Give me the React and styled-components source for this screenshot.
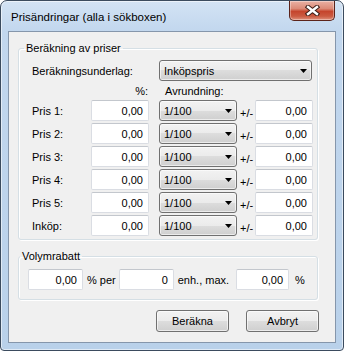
import React from 'react';
import styled, { createGlobalStyle } from 'styled-components';

const GlobalStyle = createGlobalStyle`
    html, body {
        margin: 0;
        padding: 0;
        background: #ffffff;
    }
    body {
        font-family: "Liberation Sans", Arial, sans-serif;
        font-size: 11px;
        color: #000;
    }
    * {
        box-sizing: border-box;
    }
`

const rows = ['Pris 1:', 'Pris 2:', 'Pris 3:', 'Pris 4:', 'Pris 5:', 'Inköp:'];

const Arrow = () => (
    <svg width="7" height="4" viewBox="0 0 7 4">
        <path d="M0 0 H7 L3.5 4 Z" fill="#000" />
    </svg>
);

const CloseGlyph = () => (
    <svg width="15" height="11" viewBox="0 0 15 11">
        <path d="M3 2 L12 9 M12 2 L3 9" stroke="#3b1c16" strokeWidth="4.4" strokeLinecap="square" />
        <path d="M3 2 L12 9 M12 2 L3 9" stroke="#ffffff" strokeWidth="2.4" strokeLinecap="square" />
    </svg>
);

const Combo = ({ value, wide }) => (
    <ComboBox wide={wide}>
        <span>{value}</span>
        <Arrow />
    </ComboBox>
);

const App = () => {
    return (
        <>
            <GlobalStyle />
            <Window>
                <TitleBar>
                    <Title>Prisändringar (alla i sökboxen)</Title>
                    <CloseButton><CloseGlyph /></CloseButton>
                </TitleBar>
                <Client>
                    <Group $pad="5px 4px 3px 13px">
                        <Legend>Beräkning av priser</Legend>
                        <BaseRow>
                            <span>Beräkningsunderlag:</span>
                            <Combo value="Inköpspris" wide />
                        </BaseRow>
                        <HeaderRow>
                            <span />
                            <Percent>%:</Percent>
                            <Rounding>Avrundning:</Rounding>
                        </HeaderRow>
                        <PriceList>
                            {rows.map(label => (
                                <PriceRow key={label}>
                                    <span>{label}</span>
                                    <TextBox w={58}>0,00</TextBox>
                                    <Combo value="1/100" />
                                    <PlusMinus>+/-</PlusMinus>
                                    <TextBox w={58}>0,00</TextBox>
                                </PriceRow>
                            ))}
                        </PriceList>
                    </Group>
                    <Group $pad="6px 4px 9px 9px" $top={10}>
                        <Legend>Volymrabatt</Legend>
                        <DiscountRow>
                            <TextBox w={55}>0,00</TextBox>
                            <Unit l={4} r={3}>% per</Unit>
                            <TextBox w={55}>0</TextBox>
                            <Unit l={4} r={7}>enh., max.</Unit>
                            <TextBox w={53}>0,00</TextBox>
                            <Unit l={6} r={0}>%</Unit>
                        </DiscountRow>
                    </Group>
                    <ButtonRow>
                        <Button>Beräkna</Button>
                        <Button>Avbryt</Button>
                    </ButtonRow>
                </Client>
            </Window>
        </>
    );
};

export default App;

let Window = styled.div`
    width: 344px;
    height: 351px;
    display: flex;
    flex-direction: column;
    padding: 0 7px 7px 7px;
    border: 1px solid #3b4b5e;
    border-radius: 7px 7px 4px 4px;
    background: linear-gradient(to bottom, #d3e3f4 0px, #c2d7ee 30px, #b9d1ea 100%);
    box-shadow: inset 0 0 0 1px rgba(255,255,255,0.55);
`

let TitleBar = styled.div`
    height: 30px;
    display: flex;
    justify-content: space-between;
    align-items: flex-start;
    padding-left: 3px;
`

let Title = styled.div`
    margin-top: 9px;
    font-size: 11.5px;
    line-height: 14px;
    color: #000;
`

let CloseButton = styled.div`
    width: 46px;
    height: 20px;
    margin-right: 1px;
    display: flex;
    align-items: center;
    justify-content: center;
    border: 1px solid #5b231a;
    border-top: none;
    border-radius: 0 0 5px 5px;
    background: linear-gradient(to bottom, #eab1a4 0%, #dc8a77 40%, #c5452d 55%, #cb5a41 80%, #e0917d 100%);
    box-shadow: inset 0 0 0 1px rgba(255,255,255,0.35);
`

let Client = styled.div`
    flex: 1;
    display: flex;
    flex-direction: column;
    background: #f0f0f0;
    border: 1px solid #8596ab;
`

let Group = styled.fieldset`
    width: 300px;
    margin: ${p => p.$top || 10}px 0 0 9px;
    padding: ${p => p.$pad};
    border: 1px solid #d5dfe5;
    border-radius: 3px;
    box-shadow: inset 1px 1px 0 #ffffff, 1px 1px 0 #ffffff;
    min-width: 0;
`

let Legend = styled.legend`
    margin-left: -8px;
    padding: 0 2px;
    line-height: 13px;
    font-size: 11px;
`

let BaseRow = styled.div`
    display: grid;
    grid-template-columns: 127px 153px;
    align-items: center;
    height: 21px;
`

let HeaderRow = styled.div`
    display: grid;
    grid-template-columns: 59px 58px 10px 78px;
    align-items: center;
    height: 19px;
`

let Percent = styled.span`
    text-align: right;
    padding-right: 1px;
`

let Rounding = styled.span`
    grid-column: 4;
    padding-left: 6px;
`

let PriceList = styled.div`
    display: flex;
    flex-direction: column;
    gap: 2px;
`

let PriceRow = styled.div`
    display: grid;
    grid-template-columns: 59px 68px 78px 18px 58px;
    align-items: center;
    height: 21px;
`

let TextBox = styled.div`
    width: ${p => p.w}px;
    height: 21px;
    display: flex;
    align-items: center;
    justify-content: flex-end;
    padding-right: 5px;
    background: #ffffff;
    border: 1px solid #dadde3;
    border-top-color: #c3c7cd;
    border-radius: 2px;
`

let ComboBox = styled.div`
    width: ${p => p.wide ? 153 : 78}px;
    height: 21px;
    display: flex;
    align-items: center;
    justify-content: space-between;
    padding: 0 4px 0 4px;
    border: 1px solid #707070;
    border-radius: 3px;
    background: linear-gradient(to bottom, #f2f2f2 0%, #ebebeb 50%, #dddddd 50%, #cfcfcf 100%);
    box-shadow: inset 0 0 0 1px rgba(255,255,255,0.6);
`

let PlusMinus = styled.span`
    align-self: end;
    padding-left: 3px;
    line-height: 15px;
`

let DiscountRow = styled.div`
    display: flex;
    align-items: center;
    height: 21px;
`

let Unit = styled.span`
    margin: 0 ${p => p.r}px 0 ${p => p.l}px;
    white-space: nowrap;
`

let ButtonRow = styled.div`
    display: flex;
    justify-content: flex-end;
    gap: 17px;
    margin-top: 10px;
    padding-right: 16px;
`

let Button = styled.div`
    width: 73px;
    height: 22px;
    display: flex;
    align-items: center;
    justify-content: center;
    border: 1px solid #707070;
    border-radius: 3px;
    background: linear-gradient(to bottom, #f2f2f2 0%, #ebebeb 50%, #dddddd 50%, #cfcfcf 100%);
    box-shadow: inset 0 0 0 1px rgba(255,255,255,0.6);
`
